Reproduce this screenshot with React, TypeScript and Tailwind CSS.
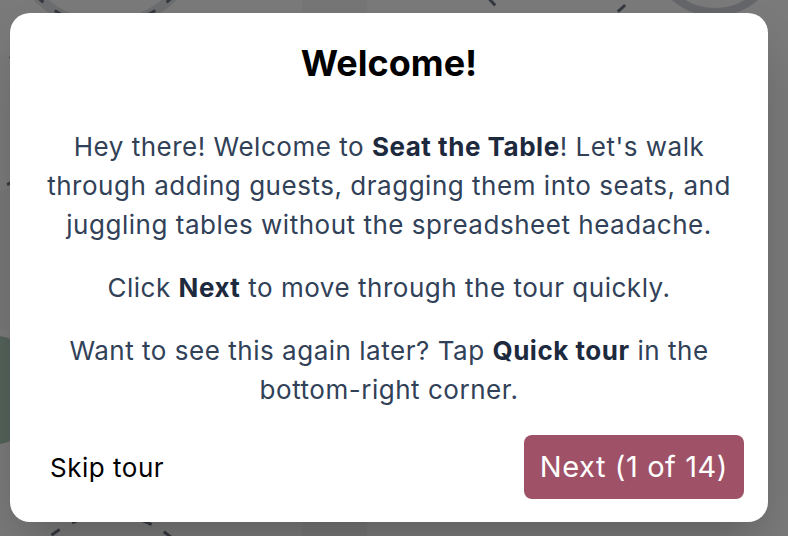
import React from 'react';

const font = { fontFamily: 'Inter, "Noto Sans", sans-serif' };

const Backdrop: React.FC = () => (
  <svg className="absolute inset-0 h-full w-full" viewBox="0 0 788 536" fill="none">
    <rect x="302" y="0" width="65" height="536" fill="#ececec" />
    <rect x="0" y="190" width="40" height="140" fill="#eeeeee" />
    <circle cx="105" cy="-70" r="95" stroke="#d8dadf" strokeWidth="10" />
    <circle cx="105" cy="-70" r="95" stroke="#6b7280" strokeWidth="3" strokeDasharray="10 14" />
    <circle cx="560" cy="-60" r="92" stroke="#6b7280" strokeWidth="3" strokeDasharray="10 14" />
    <circle cx="110" cy="610" r="95" stroke="#6b7280" strokeWidth="3" strokeDasharray="10 14" />
    <circle cx="-20" cy="120" r="70" stroke="#6b7280" strokeWidth="3" strokeDasharray="10 14" />
    <circle cx="715" cy="-50" r="62" stroke="#c9ccd2" strokeWidth="8" />
    <circle cx="-10" cy="390" r="55" fill="#a7c4b5" />
  </svg>
);

export default function App() {
  return (
    <div className="relative h-[536px] w-[788px] overflow-hidden bg-[#f4f4f4]" style={font}>
      <Backdrop />
      <div className="absolute inset-0 bg-black/50">
        <div className="pl-[10px] pt-[13px]">
          <div className="flex h-[509px] w-[758px] flex-col rounded-[20px] bg-white px-6 pb-[23px] shadow-2xl">
            <h2 className="pt-[30px] text-center text-4xl leading-10 font-bold text-black">Welcome!</h2>
            <div className="mx-auto mt-[44px] w-[710px] text-center text-[26px] leading-[39px] tracking-[0.02em] text-slate-700">
              <p>
                Hey there! Welcome to <strong className="font-bold text-slate-800">Seat the Table</strong>! Let's walk
                <br />
                through adding guests, dragging them into seats, and
                <br />
                juggling tables without the spreadsheet headache.
              </p>
              <p className="mt-6">
                Click <strong className="font-bold text-slate-800">Next</strong> to move through the tour quickly.
              </p>
              <p className="mt-6">
                Want to see this again later? Tap <strong className="font-bold text-slate-800">Quick tour</strong> in the
                <br />
                bottom-right corner.
              </p>
            </div>
            <div className="mt-auto flex items-center justify-between">
              <button className="px-4 text-[26px] tracking-[0.02em] text-black">Skip tour</button>
              <button className="h-16 rounded-lg bg-[#9f5267] px-4 text-[29px] tracking-[0.02em] text-white">
                Next (1 of 14)
              </button>
            </div>
          </div>
        </div>
      </div>
    </div>
  );
}
